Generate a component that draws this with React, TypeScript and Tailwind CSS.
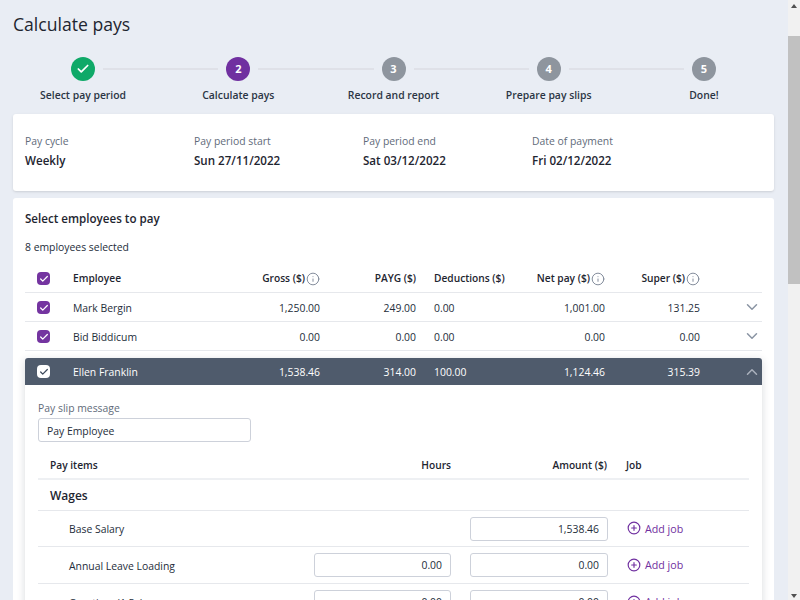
import { Check, ChevronDown, ChevronUp, CirclePlus, Info } from "lucide-react";

const steps = [
  { n: "1", label: "Select pay period", state: "done" },
  { n: "2", label: "Calculate pays", state: "active" },
  { n: "3", label: "Record and report", state: "todo" },
  { n: "4", label: "Prepare pay slips", state: "todo" },
  { n: "5", label: "Done!", state: "todo" },
];

const meta = [
  ["Pay cycle", "Weekly"],
  ["Pay period start", "Sun 27/11/2022"],
  ["Pay period end", "Sat 03/12/2022"],
  ["Date of payment", "Fri 02/12/2022"],
];

const rowGrid = "grid grid-cols-[48px_160px_87px_96px_90px_99px_95px_62px] items-center";
const itemGrid = "grid grid-cols-[276px_137px_157px_1fr] items-center";

function Tick({ light }: { light?: boolean }) {
  return (
    <div className={`ml-3 flex h-[13px] w-[13px] items-center justify-center rounded-[4px] ${light ? "bg-white" : "bg-[#7434a0]"}`}>
      <Check size={10} strokeWidth={3} className={light ? "text-[#3d4a5c]" : "text-white"} />
    </div>
  );
}

function HeadInfo({ label }: { label: string }) {
  return (
    <div className="flex items-center justify-end gap-[1px] whitespace-nowrap">
      {label}
      <Info size={14} strokeWidth={1.6} className="mt-[1px] text-[#7b8494]" />
    </div>
  );
}

function EmployeeRow({ name, vals }: { name: string; vals: string[] }) {
  return (
    <div className={`${rowGrid} h-[29px] border-b border-[#e6e8ec] pt-[1px]`}>
      <Tick />
      <div className="pt-[2px]">{name}</div>
      <div className="pt-[2px] text-right">{vals[0]}</div>
      <div className="pt-[2px] text-right">{vals[1]}</div>
      <div className="pl-[18px] pt-[2px]">{vals[2]}</div>
      <div className="pt-[2px] text-right">{vals[3]}</div>
      <div className="pt-[2px] text-right">{vals[4]}</div>
      <div className="flex justify-end pr-[1px]">
        <ChevronDown size={18} strokeWidth={2} className="mb-[1px] text-[#8a94a3]" />
      </div>
    </div>
  );
}

function Field({ value, className }: { value: string; className?: string }) {
  return (
    <div className={`flex h-6 items-center justify-end rounded-[3px] border border-[#cdd1da] bg-white px-2 pt-[2px] ${className ?? ""}`}>
      {value}
    </div>
  );
}

function AddJob() {
  return (
    <div className="flex items-center gap-1 pl-[19px] text-[10.7px] text-[#7030a0]">
      <CirclePlus size={14} strokeWidth={2} />
      <span className="pt-[1px]">Add job</span>
    </div>
  );
}

export default function App() {
  return (
    <div className="flex h-screen overflow-hidden bg-[#e9edf4] font-['Open_Sans',sans-serif] text-[10.4px] text-[#242d3a]">
      <main className="min-w-0 flex-1 pl-[13px] pr-[14px]">
        <h1 className="pt-[8px] text-[17.6px] leading-[32px] text-[#1e2530]">Calculate pays</h1>

        {/* Steps */}
        <div className="-mx-[7.5px] mt-[17px] grid grid-cols-5">
          {steps.map((s, i) => (
            <div key={s.n} className="flex flex-col items-center">
              <div className="flex w-full items-center">
                <div className={`h-[2px] flex-1 ${i > 0 ? "bg-[#dfe1e8]" : ""}`} />
                <div
                  className={`mx-2 flex h-6 w-6 items-center justify-center rounded-full text-[11px] font-bold text-white ${
                    s.state === "done" ? "bg-[#0fa968]" : s.state === "active" ? "bg-[#7030a0]" : "bg-[#8e959e]"
                  }`}
                >
                  {s.state === "done" ? <Check size={14} strokeWidth={3} /> : s.n}
                </div>
                <div className={`h-[2px] flex-1 ${i < 4 ? "bg-[#dfe1e8]" : ""}`} />
              </div>
              <div className="mt-[6px] text-[10.4px] font-semibold leading-4 text-[#2b3544]">{s.label}</div>
            </div>
          ))}
        </div>

        {/* Pay run summary */}
        <section className="mt-[11px] h-[77px] rounded-[3px] bg-white px-3 pt-[19px] shadow-sm">
          <div className="grid grid-cols-[169px_169px_169px_1fr]">
            {meta.map(([label, value]) => (
              <div key={label}>
                <div className="leading-4 text-[#5f6b7a]">{label}</div>
                <div className="mt-1 text-[11.6px] font-semibold leading-4 text-[#1e2530]">{value}</div>
              </div>
            ))}
          </div>
        </section>

        {/* Employees */}
        <section className="mt-[7px] rounded-[3px] bg-white px-3 pt-[13px]">
          <div className="text-[11.6px] font-semibold leading-4 text-[#1e2530]">Select employees to pay</div>
          <div className="mt-3 leading-4">8 employees selected</div>

          <div className={`${rowGrid} mt-[10px] h-[28px] border-b border-[#e6e8ec] text-[10.2px] font-semibold text-[#1e2530]`}>
            <Tick />
            <div>Employee</div>
            <HeadInfo label="Gross ($)" />
            <div className="text-right">PAYG ($)</div>
            <div className="whitespace-nowrap pl-[18px]">Deductions ($)</div>
            <HeadInfo label="Net pay ($)" />
            <HeadInfo label="Super ($)" />
            <div />
          </div>

          <EmployeeRow name="Mark Bergin" vals={["1,250.00", "249.00", "0.00", "1,001.00", "131.25"]} />
          <EmployeeRow name="Bid Biddicum" vals={["0.00", "0.00", "0.00", "0.00", "0.00"]} />

          <div className="mt-[7px] rounded-[3px] bg-white shadow-[0_2px_8px_rgba(40,50,70,0.18)]">
            <div className={`${rowGrid} h-[27px] rounded-t-[3px] bg-[#4f5b6c] text-white`}>
              <Tick light />
              <div className="pt-[2px]">Ellen Franklin</div>
              <div className="pt-[2px] text-right">1,538.46</div>
              <div className="pt-[2px] text-right">314.00</div>
              <div className="pl-[18px] pt-[2px]">100.00</div>
              <div className="pt-[2px] text-right">1,124.46</div>
              <div className="pt-[2px] text-right">315.39</div>
              <div className="flex justify-end pr-[1px]">
                <ChevronUp size={18} strokeWidth={2} className="text-[#aab1bc]" />
              </div>
            </div>

            <div className="px-[13px] pb-4 pt-[15px]">
              <div className="leading-4 text-[#5f6b7a]">Pay slip message</div>
              <div className="mt-[2px] flex h-6 w-[213px] items-center rounded-[3px] border border-[#cdd1da] px-2 pt-[3px]">
                Pay Employee
              </div>

              <div className={`${itemGrid} mt-[10px] h-[28px] border-b-2 border-[#eef0f3] pt-[2px] text-[10.2px] font-semibold text-[#1e2530]`}>
                <div className="pl-3">Pay items</div>
                <div className="text-right">Hours</div>
                <div className="pr-[1px] text-right">Amount ($)</div>
                <div className="pl-[18px]">Job</div>
              </div>
              <div className="flex h-[31px] items-center border-b border-[#e6e8ec] pl-3 pt-[2px] text-[12px] font-semibold text-[#1e2530]">
                Wages
              </div>
              <div className={`${itemGrid} h-9 border-b border-[#e6e8ec]`}>
                <div className="pl-[31px] pt-[2px]">Base Salary</div>
                <div />
                <Field value="1,538.46" className="ml-[19px]" />
                <AddJob />
              </div>
              <div className={`${itemGrid} h-[37px] border-b border-[#e6e8ec]`}>
                <div className="pl-[31px] pt-[3px]">Annual Leave Loading</div>
                <Field value="0.00" />
                <Field value="0.00" className="ml-[19px]" />
                <AddJob />
              </div>
              <div className={`${itemGrid} h-[37px] border-b border-[#e6e8ec]`}>
                <div className="pl-[31px] pt-[3px]">Overtime (1.5x)</div>
                <Field value="0.00" />
                <Field value="0.00" className="ml-[19px]" />
                <AddJob />
              </div>
            </div>
          </div>
        </section>
      </main>

      {/* Scrollbar */}
      <div className="flex w-3 shrink-0 flex-col bg-[#f1f1f1]">
        <div className="flex h-[12px] items-center justify-center">
          <div className="h-0 w-0 border-x-[3px] border-b-[4px] border-x-transparent border-b-[#505050]" />
        </div>
        <div className="mt-6 h-[248px] bg-[#c1c1c1]" />
        <div className="mt-auto flex h-[8px] items-center justify-center">
          <div className="h-0 w-0 border-x-[3px] border-t-[4px] border-x-transparent border-t-[#505050]" />
        </div>
      </div>
    </div>
  );
}
